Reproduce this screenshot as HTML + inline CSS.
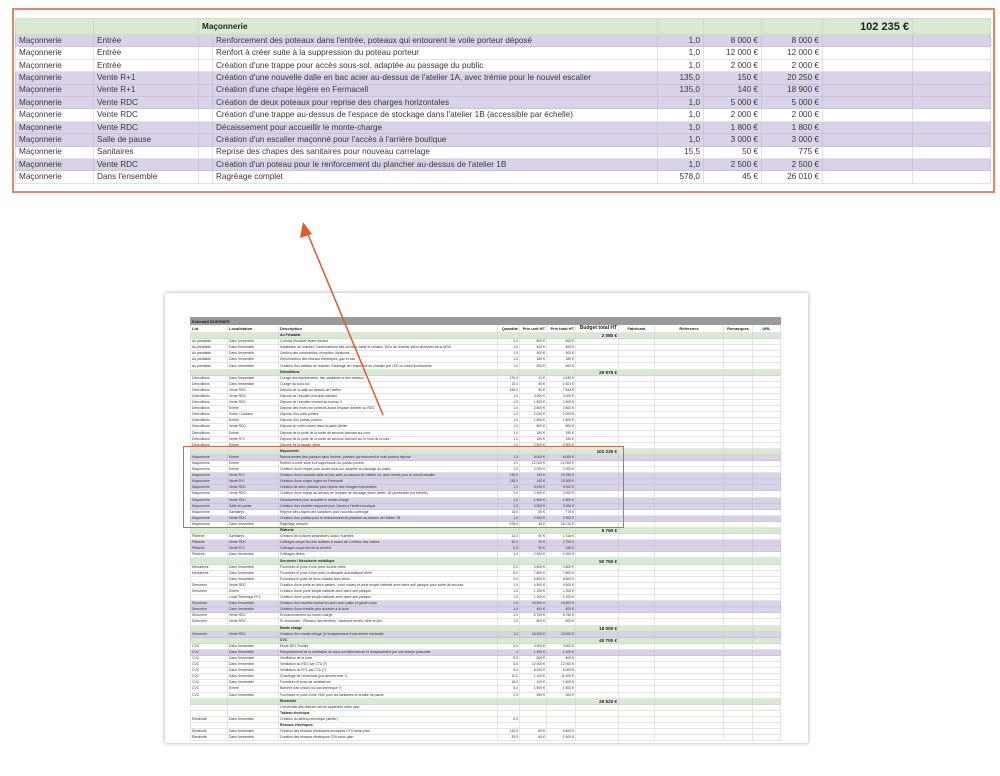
<!DOCTYPE html>
<html><head><meta charset="utf-8">
<style>
*{margin:0;padding:0;box-sizing:border-box}
body{width:1000px;height:776px;background:#fff;position:relative;overflow:hidden;font-family:"Liberation Sans",Arial,sans-serif}
table{border-collapse:collapse;table-layout:fixed;position:absolute}
td{white-space:nowrap;overflow:hidden}
#top{left:15px;top:18px;width:975px;font-size:8.2px;color:#383838}
#top td{height:12.42px;border:1px solid #e2e2e2;padding:0 3px;line-height:10px}
#top tr.h td{height:16px;background:#d9ead3;border-color:#d0dccb;color:#222}
#top tr.p td{background:#d9d2e9;border-color:#c9c2da}
#top td.r{text-align:right}
#top td.b{font-weight:bold}
#topbox{position:absolute;left:12px;top:8px;width:983px;height:185px;border:2px solid #ef8266}
#page{position:absolute;left:165px;top:293px;width:643px;height:450px;background:#fff;box-shadow:0 0 4px rgba(0,0,0,.35)}
#th{left:190px;top:317px;width:590px;font-size:3.4px;color:#333}
#th td{height:6.1px;line-height:5px;border:0.5px solid #e4e4e4;padding:0 1px}
#th tr.bar td{height:7px;background:#9a9a9a;color:#222;font-weight:bold;font-size:4px;border-color:#9a9a9a}
#th tr.ch td{height:8px;font-weight:bold;font-size:4px;color:#222}
#th tr.g td{background:#d9ead3;font-weight:bold;color:#222;border-color:#d0dccb}
#th tr.p td{background:#d9d2e9;border-color:#cbc4dc}
#th tr.s td{font-weight:bold;color:#222}
#th td.r{text-align:right}
#th td.bg{text-align:right;font-size:4.6px;font-weight:bold}
#thbox{position:absolute;left:183px;top:446px;width:441px;height:82px;border:1px solid #e8603c}
</style></head><body>
<table id="top">
<colgroup><col style="width:78px"><col style="width:105px"><col style="width:14px"><col style="width:445px"><col style="width:46px"><col style="width:58px"><col style="width:61px"><col style="width:90px"><col style="width:78px"></colgroup>
<tr class="h"><td></td><td></td><td colspan="2" class="b">Maçonnerie</td><td></td><td></td><td></td><td class="r b" style="font-size:11px">102 235 €</td><td></td></tr>
<tr class="p"><td>Maçonnerie</td><td>Entrée</td><td></td><td>Renforcement des poteaux dans l'entrée, poteaux qui entourent le voile porteur déposé</td><td class="r">1,0</td><td class="r">8 000 €</td><td class="r">8 000 €</td><td></td><td></td></tr>
<tr><td>Maçonnerie</td><td>Entrée</td><td></td><td>Renfort à créer suite à la suppression du poteau porteur</td><td class="r">1,0</td><td class="r">12 000 €</td><td class="r">12 000 €</td><td></td><td></td></tr>
<tr><td>Maçonnerie</td><td>Entrée</td><td></td><td>Création d'une trappe pour accès sous-sol, adaptée au passage du public</td><td class="r">1,0</td><td class="r">2 000 €</td><td class="r">2 000 €</td><td></td><td></td></tr>
<tr class="p"><td>Maçonnerie</td><td>Vente R+1</td><td></td><td>Création d'une nouvelle dalle en bac acier au-dessus de l'atelier 1A, avec trémie pour le nouvel escalier</td><td class="r">135,0</td><td class="r">150 €</td><td class="r">20 250 €</td><td></td><td></td></tr>
<tr class="p"><td>Maçonnerie</td><td>Vente R+1</td><td></td><td>Création d'une chape légère en Fermacell</td><td class="r">135,0</td><td class="r">140 €</td><td class="r">18 900 €</td><td></td><td></td></tr>
<tr class="p"><td>Maçonnerie</td><td>Vente RDC</td><td></td><td>Création de deux poteaux pour reprise des charges horizontales</td><td class="r">1,0</td><td class="r">5 000 €</td><td class="r">5 000 €</td><td></td><td></td></tr>
<tr><td>Maçonnerie</td><td>Vente RDC</td><td></td><td>Création d'une trappe au-dessus de l'espace de stockage dans l'atelier 1B (accessible par échelle)</td><td class="r">1,0</td><td class="r">2 000 €</td><td class="r">2 000 €</td><td></td><td></td></tr>
<tr class="p"><td>Maçonnerie</td><td>Vente RDC</td><td></td><td>Décaissement pour accueillir le monte-charge</td><td class="r">1,0</td><td class="r">1 800 €</td><td class="r">1 800 €</td><td></td><td></td></tr>
<tr class="p"><td>Maçonnerie</td><td>Salle de pause</td><td></td><td>Création d'un escalier maçonné pour l'accès à l'arrière boutique</td><td class="r">1,0</td><td class="r">3 000 €</td><td class="r">3 000 €</td><td></td><td></td></tr>
<tr><td>Maçonnerie</td><td>Sanitaires</td><td></td><td>Reprise des chapes des sanitaires pour nouveau carrelage</td><td class="r">15,5</td><td class="r">50 €</td><td class="r">775 €</td><td></td><td></td></tr>
<tr class="p"><td>Maçonnerie</td><td>Vente RDC</td><td></td><td>Création d'un poteau pour le renforcement du plancher au-dessus de l'atelier 1B</td><td class="r">1,0</td><td class="r">2 500 €</td><td class="r">2 500 €</td><td></td><td></td></tr>
<tr><td>Maçonnerie</td><td>Dans l'ensemble</td><td></td><td>Ragréage complet</td><td class="r">578,0</td><td class="r">45 €</td><td class="r">26 010 €</td><td></td><td></td></tr>
</table>
<div id="topbox"></div>

<div id="page"></div>
<table id="th">
<colgroup><col style="width:37px"><col style="width:51px"><col style="width:219px"><col style="width:22px"><col style="width:27px"><col style="width:29px"><col style="width:43px"><col style="width:36px"><col style="width:69px"><col style="width:29px"><col style="width:28px"></colgroup>
<tr class="bar"><td colspan="2">Estimatif BOESNER</td><td></td><td></td><td></td><td></td><td></td><td></td><td></td><td></td><td></td></tr>
<tr class="ch"><td>Lot</td><td>Localisation</td><td>Description</td><td class="r">Quantité</td><td class="r">Prix unit HT</td><td class="r">Prix total HT</td><td class="r" style="font-size:5px">Budget total HT</td><td style="text-align:center">Fabricant</td><td style="text-align:center">Référence</td><td style="text-align:center">Remarques</td><td style="text-align:center">URL</td></tr>
<tr class="g"><td></td><td></td><td>Au Préalable</td><td></td><td></td><td></td><td class="bg">2 080 €</td><td></td><td></td><td></td><td></td></tr>
<tr><td>Au préalable</td><td>Dans l'ensemble</td><td>Constat d'huissier avant travaux</td><td class="r">1,0</td><td class="r">500 €</td><td class="r">500 €</td><td></td><td></td><td></td><td></td><td></td></tr>
<tr><td>Au préalable</td><td>Dans l'ensemble</td><td>Installation de chantier, Cantonnement des ouvriers, table et chaises, WCs de chantier selon directives de la MOA</td><td class="r">1,0</td><td class="r">400 €</td><td class="r">400 €</td><td></td><td></td><td></td><td></td><td></td></tr>
<tr><td>Au préalable</td><td>Dans l'ensemble</td><td>Gestion des commandes, réception, livraisons</td><td class="r">1,0</td><td class="r">500 €</td><td class="r">500 €</td><td></td><td></td><td></td><td></td><td></td></tr>
<tr><td>Au préalable</td><td>Dans l'ensemble</td><td>Déconnection des réseaux électriques, gaz et eau</td><td class="r">1,0</td><td class="r">180 €</td><td class="r">180 €</td><td></td><td></td><td></td><td></td><td></td></tr>
<tr><td>Au préalable</td><td>Dans l'ensemble</td><td>Création d'un tableau de chantier. Éclairage de l'ensemble du chantier par LED ou tubes fluorescents</td><td class="r">1,0</td><td class="r">500 €</td><td class="r">500 €</td><td></td><td></td><td></td><td></td><td></td></tr>
<tr class="g"><td></td><td></td><td>Démolitions</td><td></td><td></td><td></td><td class="bg">29 979 €</td><td></td><td></td><td></td><td></td></tr>
<tr><td>Démolitions</td><td>Dans l'ensemble</td><td>Curage des équipements, des sanitaires et des réseaux</td><td class="r">170,0</td><td class="r">12 €</td><td class="r">4 630 €</td><td></td><td></td><td></td><td></td><td></td></tr>
<tr><td>Démolitions</td><td>Dans l'ensemble</td><td>Curage du sous-sol</td><td class="r">10,4</td><td class="r">60 €</td><td class="r">1 601 €</td><td></td><td></td><td></td><td></td><td></td></tr>
<tr><td>Démolitions</td><td>Vente RDC</td><td>Dépose de la dalle au-dessus de l'atelier</td><td class="r">156,0</td><td class="r">50 €</td><td class="r">7 842 €</td><td></td><td></td><td></td><td></td><td></td></tr>
<tr><td>Démolitions</td><td>Vente RDC</td><td>Dépose de l'escalier principal existant</td><td class="r">1,0</td><td class="r">3 000 €</td><td class="r">3 000 €</td><td></td><td></td><td></td><td></td><td></td></tr>
<tr><td>Démolitions</td><td>Vente RDC</td><td>Dépose de l'escalier menant au bureau 2</td><td class="r">1,0</td><td class="r">1 800 €</td><td class="r">1 800 €</td><td></td><td></td><td></td><td></td><td></td></tr>
<tr><td>Démolitions</td><td>Entrée</td><td>Dépose des murs non porteurs avant l'espace d'atelier au RDC</td><td class="r">1,0</td><td class="r">2 800 €</td><td class="r">2 800 €</td><td></td><td></td><td></td><td></td><td></td></tr>
<tr><td>Démolitions</td><td>Sortie / Caisses</td><td>Dépose d'un voile porteur</td><td class="r">1,0</td><td class="r">2 000 €</td><td class="r">2 000 €</td><td></td><td></td><td></td><td></td><td></td></tr>
<tr><td>Démolitions</td><td>Entrée</td><td>Dépose d'un poteau porteur</td><td class="r">1,0</td><td class="r">1 800 €</td><td class="r">1 800 €</td><td></td><td></td><td></td><td></td><td></td></tr>
<tr><td>Démolitions</td><td>Vente RDC</td><td>Dépose du volet roulant dans la partie Atelier</td><td class="r">1,0</td><td class="r">800 €</td><td class="r">800 €</td><td></td><td></td><td></td><td></td><td></td></tr>
<tr><td>Démolitions</td><td>Entrée</td><td>Dépose de la porte de la sortie de secours donnant sur cour</td><td class="r">1,0</td><td class="r">150 €</td><td class="r">150 €</td><td></td><td></td><td></td><td></td><td></td></tr>
<tr><td>Démolitions</td><td>Vente R+1</td><td>Dépose de la porte de la sortie de secours donnant sur le fond de la cour</td><td class="r">1,0</td><td class="r">150 €</td><td class="r">150 €</td><td></td><td></td><td></td><td></td><td></td></tr>
<tr><td>Démolitions</td><td>Entrée</td><td>Dépose de la façade vitrée</td><td class="r">1,0</td><td class="r">2 500 €</td><td class="r">2 500 €</td><td></td><td></td><td></td><td></td><td></td></tr>
<tr class="g"><td></td><td></td><td>Maçonnerie</td><td></td><td></td><td></td><td class="bg">102 235 €</td><td></td><td></td><td></td><td></td></tr>
<tr class="p"><td>Maçonnerie</td><td>Entrée</td><td>Renforcement des poteaux dans l'entrée, poteaux qui entourent le voile porteur déposé</td><td class="r">1,0</td><td class="r">8 000 €</td><td class="r">8 000 €</td><td></td><td></td><td></td><td></td><td></td></tr>
<tr><td>Maçonnerie</td><td>Entrée</td><td>Renfort à créer suite à la suppression du poteau porteur</td><td class="r">1,0</td><td class="r">12 000 €</td><td class="r">12 000 €</td><td></td><td></td><td></td><td></td><td></td></tr>
<tr><td>Maçonnerie</td><td>Entrée</td><td>Création d'une trappe pour accès sous-sol, adaptée au passage du public</td><td class="r">1,0</td><td class="r">2 000 €</td><td class="r">2 000 €</td><td></td><td></td><td></td><td></td><td></td></tr>
<tr class="p"><td>Maçonnerie</td><td>Vente R+1</td><td>Création d'une nouvelle dalle en bac acier au-dessus de l'atelier 1A, avec trémie pour le nouvel escalier</td><td class="r">135,0</td><td class="r">150 €</td><td class="r">20 250 €</td><td></td><td></td><td></td><td></td><td></td></tr>
<tr class="p"><td>Maçonnerie</td><td>Vente R+1</td><td>Création d'une chape légère en Fermacell</td><td class="r">135,0</td><td class="r">140 €</td><td class="r">18 900 €</td><td></td><td></td><td></td><td></td><td></td></tr>
<tr class="p"><td>Maçonnerie</td><td>Vente RDC</td><td>Création de deux poteaux pour reprise des charges horizontales</td><td class="r">1,0</td><td class="r">5 000 €</td><td class="r">5 000 €</td><td></td><td></td><td></td><td></td><td></td></tr>
<tr><td>Maçonnerie</td><td>Vente RDC</td><td>Création d'une trappe au-dessus de l'espace de stockage dans l'atelier 1B (accessible par échelle)</td><td class="r">1,0</td><td class="r">2 000 €</td><td class="r">2 000 €</td><td></td><td></td><td></td><td></td><td></td></tr>
<tr class="p"><td>Maçonnerie</td><td>Vente RDC</td><td>Décaissement pour accueillir le monte-charge</td><td class="r">1,0</td><td class="r">1 800 €</td><td class="r">1 800 €</td><td></td><td></td><td></td><td></td><td></td></tr>
<tr class="p"><td>Maçonnerie</td><td>Salle de pause</td><td>Création d'un escalier maçonné pour l'accès à l'arrière boutique</td><td class="r">1,0</td><td class="r">3 000 €</td><td class="r">3 000 €</td><td></td><td></td><td></td><td></td><td></td></tr>
<tr><td>Maçonnerie</td><td>Sanitaires</td><td>Reprise des chapes des sanitaires pour nouveau carrelage</td><td class="r">15,5</td><td class="r">50 €</td><td class="r">775 €</td><td></td><td></td><td></td><td></td><td></td></tr>
<tr class="p"><td>Maçonnerie</td><td>Vente RDC</td><td>Création d'un poteau pour le renforcement du plancher au-dessus de l'atelier 1B</td><td class="r">1,0</td><td class="r">2 500 €</td><td class="r">2 500 €</td><td></td><td></td><td></td><td></td><td></td></tr>
<tr><td>Maçonnerie</td><td>Dans l'ensemble</td><td>Ragréage complet</td><td class="r">578,0</td><td class="r">45 €</td><td class="r">26 010 €</td><td></td><td></td><td></td><td></td><td></td></tr>
<tr class="g"><td></td><td></td><td>Plâtrerie</td><td></td><td></td><td></td><td class="bg">6 750 €</td><td></td><td></td><td></td><td></td></tr>
<tr><td>Plâtrerie</td><td>Sanitaires</td><td>Création de cloisons séparatives locaux humides</td><td class="r">14,0</td><td class="r">90 €</td><td class="r">1 316 €</td><td></td><td></td><td></td><td></td><td></td></tr>
<tr class="p"><td>Plâtrerie</td><td>Vente RDC</td><td>Coffrages coupe feu des fenêtres à moins de 4 mètres des voisins</td><td class="r">30,0</td><td class="r">90 €</td><td class="r">2 700 €</td><td></td><td></td><td></td><td></td><td></td></tr>
<tr class="p"><td>Plâtrerie</td><td>Vente R+1</td><td>Coffrages coupe feu de la verrière</td><td class="r">6,3</td><td class="r">90 €</td><td class="r">540 €</td><td></td><td></td><td></td><td></td><td></td></tr>
<tr><td>Plâtrerie</td><td>Dans l'ensemble</td><td>Coffrages divers</td><td class="r">1,0</td><td class="r">2 000 €</td><td class="r">2 000 €</td><td></td><td></td><td></td><td></td><td></td></tr>
<tr class="g"><td></td><td></td><td>Serrurerie / Menuiserie métallique</td><td></td><td></td><td></td><td class="bg">50 750 €</td><td></td><td></td><td></td><td></td></tr>
<tr><td>Menuiserie</td><td>Dans l'ensemble</td><td>Fourniture et pose d'une porte double vitrée</td><td class="r">5,0</td><td class="r">4 800 €</td><td class="r">4 800 €</td><td></td><td></td><td></td><td></td><td></td></tr>
<tr><td>Menuiserie</td><td>Dans l'ensemble</td><td>Fourniture et pose d'une porte coulissante automatique vitrée</td><td class="r">5,0</td><td class="r">7 800 €</td><td class="r">7 800 €</td><td></td><td></td><td></td><td></td><td></td></tr>
<tr><td></td><td>Dans l'ensemble</td><td>Fourniture et pose de deux châssis fixes vitrés</td><td class="r">5,0</td><td class="r">6 800 €</td><td class="r">6 800 €</td><td></td><td></td><td></td><td></td><td></td></tr>
<tr><td>Serrurerie</td><td>Vente RDC</td><td>Création d'une porte en deux parties : volet roulant et porte simple battante avec barre anti panique pour sortie de secours</td><td class="r">1,0</td><td class="r">4 500 €</td><td class="r">4 500 €</td><td></td><td></td><td></td><td></td><td></td></tr>
<tr><td>Serrurerie</td><td>Entrée</td><td>Création d'une porte simple battante avec barre anti panique</td><td class="r">1,0</td><td class="r">1 200 €</td><td class="r">1 200 €</td><td></td><td></td><td></td><td></td><td></td></tr>
<tr><td></td><td>Local Technique R+1</td><td>Création d'une porte simple battante avec barre anti panique</td><td class="r">1,0</td><td class="r">1 200 €</td><td class="r">1 200 €</td><td></td><td></td><td></td><td></td><td></td></tr>
<tr class="p"><td>Serrurerie</td><td>Dans l'ensemble</td><td>Création d'un escalier central en acier avec palier et garde corps</td><td class="r">1,0</td><td class="r">16 800 €</td><td class="r">16 800 €</td><td></td><td></td><td></td><td></td><td></td></tr>
<tr class="p"><td>Serrurerie</td><td>Dans l'ensemble</td><td>Création d'une échelle pour accéder à la cuve</td><td class="r">1,0</td><td class="r">400 €</td><td class="r">400 €</td><td></td><td></td><td></td><td></td><td></td></tr>
<tr><td>Serrurerie</td><td>Vente RDC</td><td>Encloisonnement du monte charge</td><td class="r">1,0</td><td class="r">6 750 €</td><td class="r">6 750 €</td><td></td><td></td><td></td><td></td><td></td></tr>
<tr><td>Serrurerie</td><td>Vente RDC</td><td>Si nécessaire : Révision des fenêtres : vanteaux serrés, mise en jeu</td><td class="r">1,0</td><td class="r">600 €</td><td class="r">600 €</td><td></td><td></td><td></td><td></td><td></td></tr>
<tr class="g"><td></td><td></td><td>Monte charge</td><td></td><td></td><td></td><td class="bg">18 000 €</td><td></td><td></td><td></td><td></td></tr>
<tr class="p"><td>Serrurerie</td><td>Vente RDC</td><td>Création d'un monte charge (à l'emplacement d'une trémie existante)</td><td class="r">1,0</td><td class="r">18 000 €</td><td class="r">18 000 €</td><td></td><td></td><td></td><td></td><td></td></tr>
<tr class="g"><td></td><td></td><td>CVC</td><td></td><td></td><td></td><td class="bg">40 700 €</td><td></td><td></td><td></td><td></td></tr>
<tr><td>CVC</td><td>Dans l'ensemble</td><td>Etude BET Fluides</td><td class="r">5,0</td><td class="r">3 500 €</td><td class="r">3 500 €</td><td></td><td></td><td></td><td></td><td></td></tr>
<tr class="p"><td>CVC</td><td>Dans l'ensemble</td><td>Remplacement de la ventilation du sous-sol défectueuse et remplacement par une pompe puissante</td><td class="r">1</td><td class="r">1 400 €</td><td class="r">1 400 €</td><td></td><td></td><td></td><td></td><td></td></tr>
<tr><td>CVC</td><td>Dans l'ensemble</td><td>Ventilation de la cuve</td><td class="r">5,0</td><td class="r">800 €</td><td class="r">800 €</td><td></td><td></td><td></td><td></td><td></td></tr>
<tr><td>CVC</td><td>Dans l'ensemble</td><td>Ventilation du RDC par CTA (?)</td><td class="r">5,0</td><td class="r">12 000 €</td><td class="r">12 000 €</td><td></td><td></td><td></td><td></td><td></td></tr>
<tr><td>CVC</td><td>Dans l'ensemble</td><td>Ventilation du R+1 par CTA (?)</td><td class="r">5,0</td><td class="r">6 000 €</td><td class="r">6 000 €</td><td></td><td></td><td></td><td></td><td></td></tr>
<tr><td>CVC</td><td>Dans l'ensemble</td><td>Chauffage de l'ensemble (par aérothermie ?)</td><td class="r">10,0</td><td class="r">1 100 €</td><td class="r">11 000 €</td><td></td><td></td><td></td><td></td><td></td></tr>
<tr><td>CVC</td><td>Dans l'ensemble</td><td>Fourniture et pose de ventilateurs</td><td class="r">16,0</td><td class="r">100 €</td><td class="r">1 600 €</td><td></td><td></td><td></td><td></td><td></td></tr>
<tr><td>CVC</td><td>Entrée</td><td>Barrière d'air chaud (ou cas thermique ?)</td><td class="r">5,0</td><td class="r">1 500 €</td><td class="r">1 500 €</td><td></td><td></td><td></td><td></td><td></td></tr>
<tr><td>CVC</td><td>Dans l'ensemble</td><td>Fourniture et pose d'une VMC pour les sanitaires et la salle de pause</td><td class="r">2,0</td><td class="r">450 €</td><td class="r">900 €</td><td></td><td></td><td></td><td></td><td></td></tr>
<tr class="g"><td></td><td></td><td>Electricité</td><td></td><td></td><td></td><td class="bg">29 520 €</td><td></td><td></td><td></td><td></td></tr>
<tr><td></td><td></td><td>L'ensemble des réseaux seront apparents selon plan</td><td></td><td></td><td></td><td></td><td></td><td></td><td></td><td></td></tr>
<tr class="s"><td></td><td></td><td>Tableau électrique</td><td></td><td></td><td></td><td></td><td></td><td></td><td></td><td></td></tr>
<tr><td>Electricité</td><td>Dans l'ensemble</td><td>Création du tableau électrique (atelier)</td><td class="r">5,0</td><td></td><td></td><td></td><td></td><td></td><td></td><td></td></tr>
<tr class="s"><td></td><td></td><td>Réseaux électriques</td><td></td><td></td><td></td><td></td><td></td><td></td><td></td><td></td></tr>
<tr><td>Electricité</td><td>Dans l'ensemble</td><td>Création des réseaux électriques encastrés CFO selon plan</td><td class="r">110,0</td><td class="r">60 €</td><td class="r">6 600 €</td><td></td><td></td><td></td><td></td><td></td></tr>
<tr><td>Electricité</td><td>Dans l'ensemble</td><td>Création des réseaux électriques CFA selon plan</td><td class="r">25,0</td><td class="r">60 €</td><td class="r">1 500 €</td><td></td><td></td><td></td><td></td><td></td></tr>
</table>
<div id="thbox"></div>

<svg style="position:absolute;left:0;top:0" width="1000" height="776">
<line x1="383" y1="415" x2="307" y2="232" stroke="#e4572e" stroke-width="1.5"/>
<polygon points="303,222 300,238 312,234" fill="#e4572e"/>
</svg>
</body></html>
